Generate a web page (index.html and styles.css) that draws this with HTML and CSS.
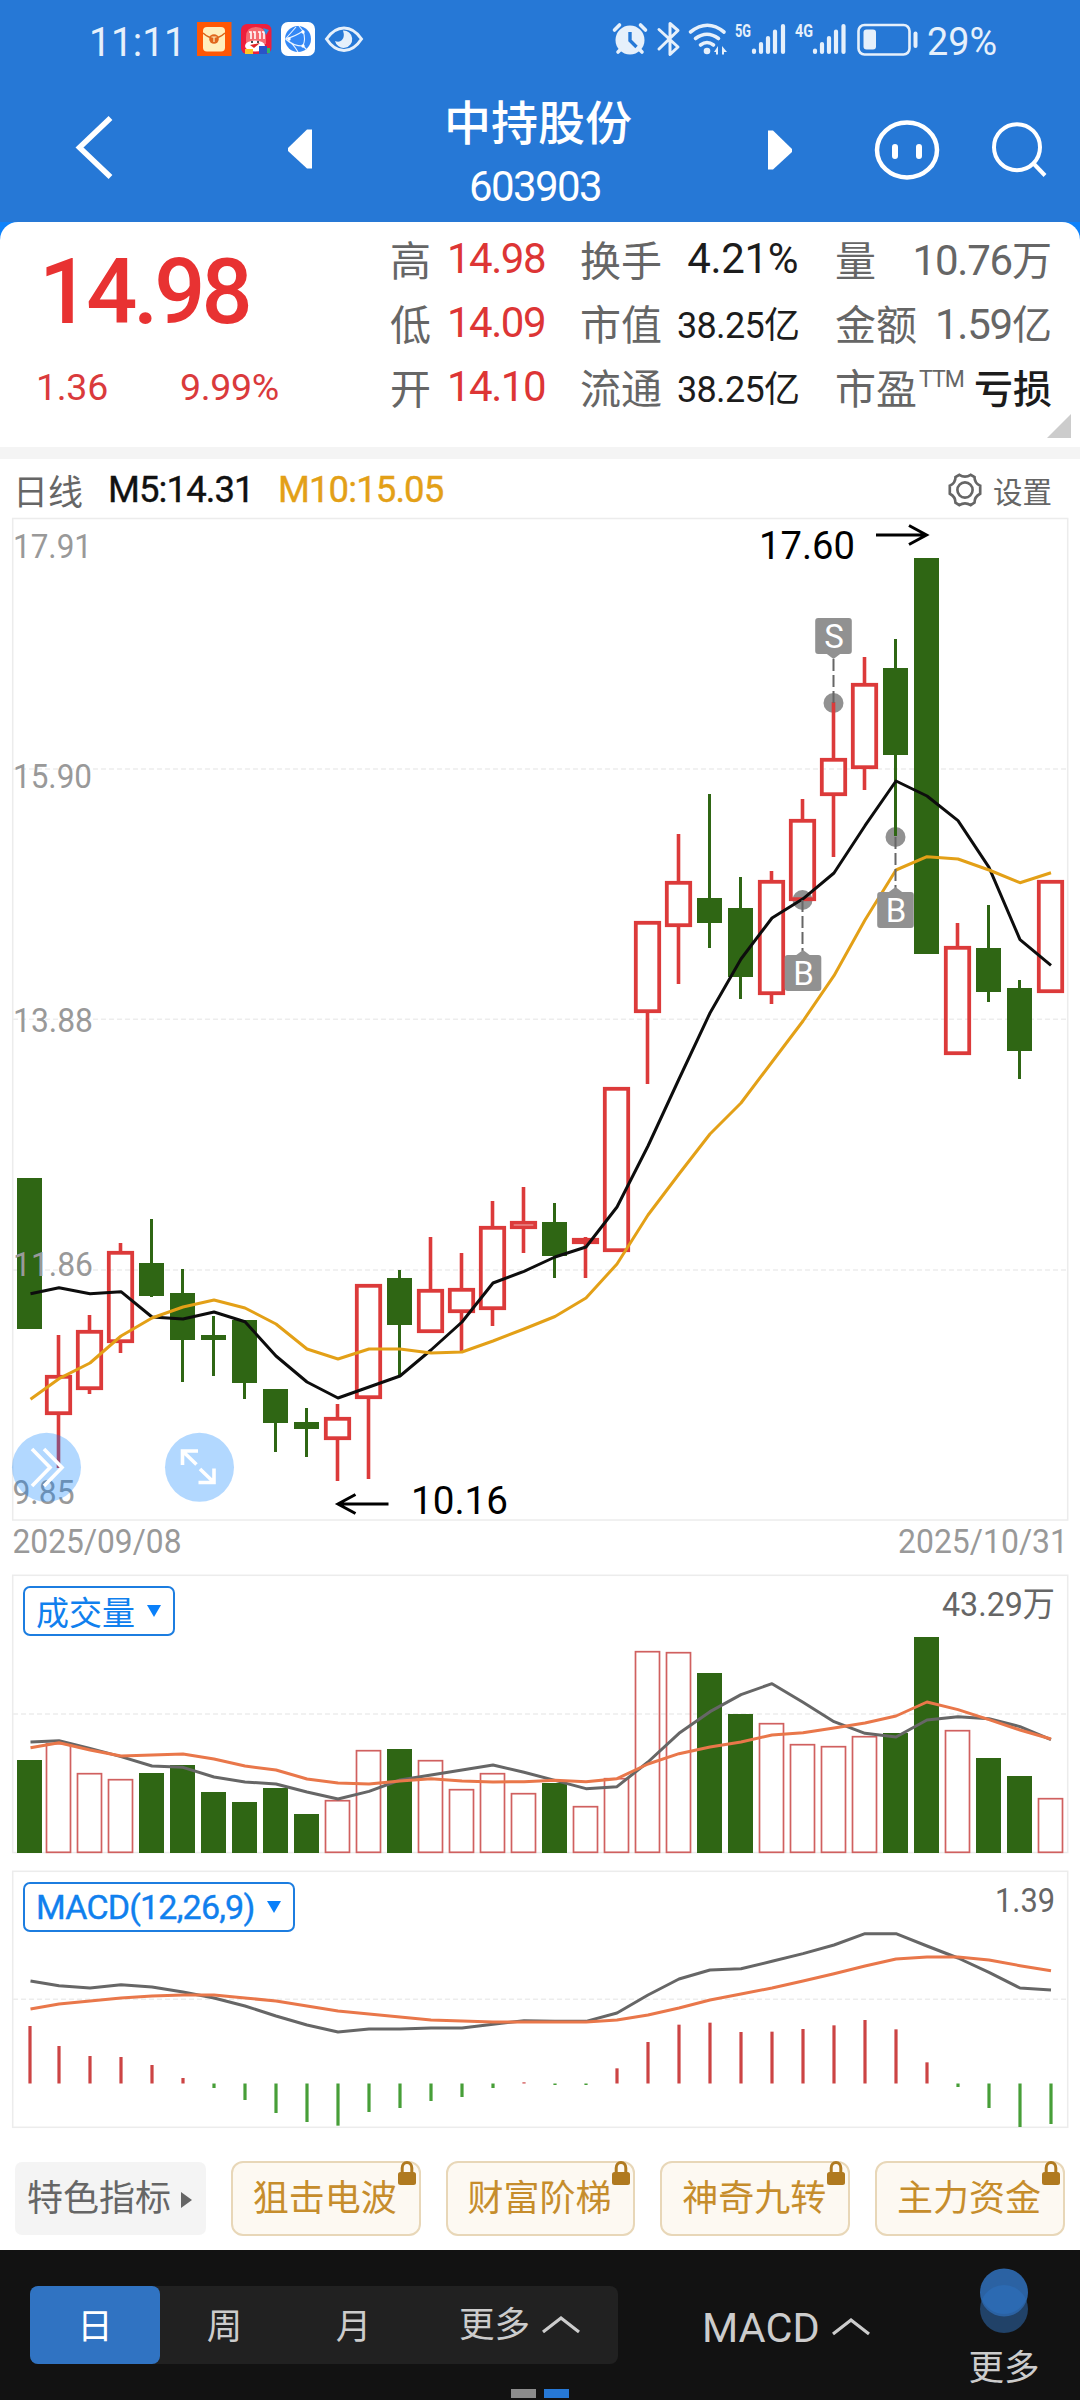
FILE: index.html
```html
<!DOCTYPE html>
<html lang="zh-CN">
<head>
<meta charset="utf-8">
<title>中持股份 603903</title>
<link rel="stylesheet" href="styles.css">
</head>
<body>
<div class="app">
  <header class="top">
    <div class="status">
      <svg class="status-icons" viewBox="0 0 1080 75" width="1080" height="75">
        <text class="clock" x="89" y="55.5" textLength="97" lengthAdjust="spacingAndGlyphs">11:11</text>
        <g>
          <rect x="197" y="22" width="34.5" height="34" fill="#ff5705"/>
          <rect x="203" y="27" width="22" height="24.500" rx="4" fill="#ffeebd"/>
          <path d="M203 33q11 10 22 0" fill="none" stroke="#d9641a" stroke-width="1.500"/>
          <circle cx="214" cy="39" r="4.800" fill="#e0651c"/>
          <path d="M211.500 37h5M214 37v5" stroke="#ffeebd" stroke-width="1.200"/>
        </g>
        <g>
          <rect x="241" y="24" width="30.500" height="30" rx="6" fill="#ed1f3c"/>
          <path d="M246 44v-7q0-10 10-10t10 10v7z" fill="#f56a70"/>
          <path d="M249 32h2v7M253 32h2v7M258 32h2v7M262 32h2v7" stroke="#fff" stroke-width="1.600" fill="none"/>
          <ellipse cx="255" cy="46" rx="10" ry="5.500" fill="#fff"/>
          <path d="M250 45l10-2-6 5z" fill="#e02525"/><circle cx="252" cy="42" r="1" fill="#111"/><circle cx="258" cy="42" r="1" fill="#111"/>
          <rect x="245" y="49" width="8" height="5" fill="#ffc625"/><rect x="259" y="46" width="8" height="8" fill="#2a54c8"/><path d="M263 28l6 2-3 5z" fill="#2b8fe0"/><rect x="267" y="48" width="3" height="5" fill="#35b566"/>
        </g>
        <g>
          <rect x="281" y="22" width="34" height="34" rx="7" fill="#fff"/>
          <circle cx="298" cy="39" r="13" fill="#3488f5"/>
          <path d="M285.500 39Q296 36 303 31Q306 39 303 46Q293 46 285.500 39Q293 43 298 52M303 31L299 26M303 46l4 4M285.500 39L296 27" fill="none" stroke="#e8f3ff" stroke-width="1.100"/>
          <circle cx="289" cy="39" r="1.700" fill="#fff"/><circle cx="303" cy="32" r="1.700" fill="#fff"/><circle cx="303" cy="46" r="1.700" fill="#fff"/>
        </g>
        <path d="M326.500 39Q334 28 344 28T361.500 39Q354 50.500 344 50.500T326.500 39z" fill="none" stroke="#e6f0fb" stroke-width="3"/>
        <path d="M343 30.500a8.700 8.700 0 1 1-8 10.500q4 2 7-1t1-9.500z" fill="#e6f0fb"/>
        <g class="ink">
          <circle cx="630" cy="40" r="14.500"/>
          <path class="ln" stroke-width="3.600" d="M614.500 30l5-5M640.500 25l5 5M618 52l3-3M639 49l3 3"/>
          <path d="M630 32v8.500l6.500 6.500" fill="none" stroke="#2678d6" stroke-width="3.400"/>
          <path class="ln" stroke-width="3" d="M659 29.500l19 17.500-8 7.500v-31l8 7-19 18.500"/>
          <path class="ln" stroke-width="3.600" d="M690.500 32q17-13.500 33.500 0M695.500 38.500q11.500-8.500 23 0M700.500 45q6.500-5 13 0"/>
          <circle cx="707" cy="51" r="3.300"/>
          <path d="M714 52l4-6v8.500h-2V52zM722 46l5 6h-3v2.500h-2z"/>
          <text class="net" x="735" y="37" textLength="16" lengthAdjust="spacingAndGlyphs">5G</text>
          <text class="net" x="795" y="37" textLength="18" lengthAdjust="spacingAndGlyphs">4G</text>
          <path class="ln" stroke-width="4.200" d="M754 50.500v1.500M761 44v8M768 38v14M775 31.500v20.500M783 26v26M815 50.500v1.500M822 44v8M829 38v14M836 31.500v20.500M843.500 26v26"/>
          <rect x="858.500" y="25" width="51" height="29.500" rx="6" fill="none" stroke="#e6f0fb" stroke-width="2.600"/>
          <rect x="863.500" y="29.500" width="12.500" height="20" rx="3"/>
          <rect x="913.500" y="31.500" width="4" height="16.500" rx="2"/>
          <text class="batt" x="927" y="54.500" textLength="70" lengthAdjust="spacingAndGlyphs">29%</text>
        </g>
      </svg>
    </div>
    <nav class="nav">
      <svg class="back" viewBox="75 114 40 68" width="40" height="68"><path d="M110.500 118L79.500 147.500 110.500 177" fill="none" stroke="#fff" stroke-width="5.500"/></svg>
      <svg class="prev" viewBox="0 0 24 40" width="24" height="40"><path d="M24 .5v39h-5L0 22v-3L19 .500z" fill="#fff"/></svg>
      <div class="title"><h1>中持股份</h1><span>603903</span></div>
      <svg class="next" viewBox="0 0 24 40" width="24" height="40"><path d="M0 .500v39h5L24 22v-3L5 .500z" fill="#fff"/></svg>
      <svg class="robot" viewBox="0 0 66 62" width="66" height="62"><ellipse cx="33" cy="31" rx="30" ry="27.500" fill="none" stroke="#fff" stroke-width="4.500"/><path d="M21 28v9M45 28v9" stroke="#fff" stroke-width="6" stroke-linecap="round"/></svg>
      <svg class="search" viewBox="990 120 60 60" width="60" height="60"><circle cx="1017" cy="147.200" r="23" fill="none" stroke="#fff" stroke-width="4"/><path d="M1034 164l11 11.500" stroke="#fff" stroke-width="4"/></svg>
    </nav>
  </header>

  <section class="quote">
    <div class="price">
      <strong>14.98</strong>
      <div class="change"><span>1.36</span><span>9.99%</span></div>
    </div>
    <dl class="col col-a">
      <div><dt>高</dt><dd class="red">14.98</dd></div>
      <div><dt>低</dt><dd class="red">14.09</dd></div>
      <div><dt>开</dt><dd class="red">14.10</dd></div>
    </dl>
    <dl class="col col-b">
      <div><dt>换手</dt><dd class="pct">4.21%</dd></div>
      <div><dt>市值</dt><dd class="small">38.25<i>亿</i></dd></div>
      <div><dt>流通</dt><dd class="small">38.25<i>亿</i></dd></div>
    </dl>
    <dl class="col col-c">
      <div><dt>量</dt><dd class="gray">10.76<i>万</i></dd></div>
      <div><dt>金额</dt><dd class="gray">1.59<i>亿</i></dd></div>
      <div><dt>市盈<sup>TTM</sup></dt><dd class="cjk">亏损</dd></div>
    </dl>
    <i class="fold"></i>
  </section>

  <div class="legend">
    <span class="kline">日线</span><span class="m5">M5:14.31</span><span class="m10">M10:15.05</span>
    <span class="settings">
      <svg viewBox="0 0 40 40" width="38" height="38" fill="none" stroke="#666" stroke-width="2.800"><path d="M14 4q6 4 12 0l4 2.300q0 6.500 6 9.200v8.500q-6 3-6 9.200L26 36q-6-4-12 0l-4-2.600q0-6.400-6-9.400v-8.500q6-2.700 6-9.200z"/><circle cx="20" cy="20" r="8"/></svg>
      <span>设置</span>
    </span>
  </div>

  <svg id="kchart" viewBox="0 516 1080 1050" width="1080" height="1050"></svg>
  <div class="panel volume">
    <svg id="vchart" viewBox="0 1566 1080 296" width="1080" height="296"></svg>
    <button class="picker">成交量<b></b></button>
  </div>
  <div class="panel macd">
    <svg id="mchart" viewBox="0 1862 1080 275" width="1080" height="275"></svg>
    <button class="picker latin"><span>MACD(12,26,9)</span><b></b></button>
  </div>

  <div class="chips">
    <div class="chip plain">特色指标<b></b></div>
    <div class="chip">狙击电波<svg class="lock" viewBox="0 0 18 24" width="18" height="24"><path d="M4.200 11V7a4.800 5.500 0 0 1 9.600 0v4" fill="none" stroke="#b07a20" stroke-width="3"/><rect y="11" width="18" height="13" rx="2.500" fill="#b07a20"/></svg></div>
    <div class="chip">财富阶梯<svg class="lock" viewBox="0 0 18 24" width="18" height="24"><path d="M4.200 11V7a4.800 5.500 0 0 1 9.600 0v4" fill="none" stroke="#b07a20" stroke-width="3"/><rect y="11" width="18" height="13" rx="2.500" fill="#b07a20"/></svg></div>
    <div class="chip">神奇九转<svg class="lock" viewBox="0 0 18 24" width="18" height="24"><path d="M4.200 11V7a4.800 5.500 0 0 1 9.600 0v4" fill="none" stroke="#b07a20" stroke-width="3"/><rect y="11" width="18" height="13" rx="2.500" fill="#b07a20"/></svg></div>
    <div class="chip">主力资金<svg class="lock" viewBox="0 0 18 24" width="18" height="24"><path d="M4.200 11V7a4.800 5.500 0 0 1 9.600 0v4" fill="none" stroke="#b07a20" stroke-width="3"/><rect y="11" width="18" height="13" rx="2.500" fill="#b07a20"/></svg></div>
  </div>

  <footer class="bottom">
    <div class="tabs">
      <span class="tab on">日</span><span class="tab">周</span><span class="tab">月</span>
      <span class="tab more">更多<svg viewBox="0 0 40 20" width="40" height="20"><path d="M2 17L20 3l18 14" fill="none" stroke="#ccc" stroke-width="3.200"/></svg></span>
    </div>
    <div class="indicator">MACD<svg viewBox="0 0 40 20" width="40" height="20"><path d="M2 17L20 3l18 14" fill="none" stroke="#ccc" stroke-width="3.200"/></svg></div>
    <div class="menu">
      <svg viewBox="0 0 48 66" width="48" height="66"><circle cx="24" cy="41" r="24" fill="#214268"/><circle cx="24" cy="24.500" r="24" fill="#2b62a3"/><path d="M2 31.500a24 24 0 0 1 44 0a24 24 0 0 1-44 0z" fill="#2c6ab2"/></svg>
      <span>更多</span>
    </div>
    <div class="pager"><i></i><i class="cur"></i></div>
  </footer>
</div>
<script src="chart.js"></script>
</body>
</html>
```
FILE: styles.css
```css
* { box-sizing: border-box; margin: 0; padding: 0; }
body {
  width: 1080px;
  height: 2400px;
  overflow: hidden;
  background: #fff;
  color: #666;
  font-family: Roboto, "Noto Sans CJK SC", sans-serif;
}
i { font-style: normal; }
svg { display: block; flex: none; }
.app { display: flex; flex-direction: column; height: 2400px; }

/* header */
.top { height: 222px; background: #2678d6; color: #fff; flex: none; }
.status { height: 75px; }
.clock { font-size: 41px; fill: #e6f0fb; }
.ink { fill: #e6f0fb; }
.ink .ln { fill: none; stroke: #e6f0fb; stroke-linecap: round; stroke-linejoin: round; }
.net { font-size: 19px; font-weight: 700; }
.batt { font-size: 38px; }
.nav { display: flex; height: 147px; align-items: flex-start; }
.back { margin: 39px 0 0 75px; }
.prev { margin: 54px 0 0 173px; }
.title { width: 276px; margin: 21px 92px 0 88px; text-align: center; }
.title h1 { font-size: 47px; line-height: 56px; font-weight: 500; }
.title span { display: block; margin: 7px 6px 0 0; font-size: 42px; line-height: 56px; letter-spacing: -1.600px; }
.next { margin-top: 55px; }
.robot { margin: 44px 0 0 82px; }
.search { margin: 45px 0 0 50px; }

/* quote */
.quote {
  position: relative;
  display: flex;
  flex: none;
  height: 225px;
  border-radius: 18px 18px 0 0;
  background: #fff;
}
.app::before { content: ""; position: absolute; z-index: -1; top: 222px; left: 0; width: 1080px; height: 24px; background: #0d82fb; }
.price { width: 390px; padding: 26px 0 0 39px; color: #e83232; }
.price strong { display: block; font-size: 90px; line-height: 90px; font-weight: 500; letter-spacing: -4px; }
.change { display: flex; gap: 72px; margin-top: 24px; margin-left: -3px; font-size: 37.500px; line-height: 50px; color: #da3a3c; letter-spacing: -.3px; }
.col { padding-top: 4px; }
.col div { display: flex; align-items: center; justify-content: space-between; height: 64px; }
dt { font-size: 41px; white-space: nowrap; }
dd { font-size: 42px; letter-spacing: -1.200px; color: #1c1c1c; white-space: nowrap; }
dd i { font-size: 40px; letter-spacing: 0; }
dd.red { color: #dd3535; letter-spacing: -1.500px; margin-right: 1px; }
dd.pct { letter-spacing: -.4px; margin-right: 2px; }
dd.gray { color: #666; }
dd.small { font-size: 36px; letter-spacing: -.7px; }
dd.small i { font-size: 36px; letter-spacing: 0; }
dd.cjk { font-size: 39px; letter-spacing: 0; font-weight: 500; }
.col-a { width: 156px; margin-right: 34px; }
.col-b { width: 220px; margin-right: 35px; }
.col-c { width: 217px; }
sup { display: inline-block; font-size: 23px; line-height: 23px; vertical-align: 17px; letter-spacing: -1px; margin-left: 2px; }
.fold { position: absolute; right: 9px; bottom: 9px; border: 12px solid transparent; border-right-color: #ccc; border-bottom-color: #ccc; }

/* legend */
.legend { display: flex; align-items: center; flex: none; height: 69px; padding: 4px 28px 0 13px; border-top: 12px solid #f4f4f4; font-size: 36.500px; }
.kline { font-size: 35px; margin-right: 25px; }
.m5 { color: #111; width: 141px; margin-right: 29px; letter-spacing: -.9px; white-space: nowrap; -webkit-text-stroke: .4px; }
.m10 { color: #e3a017; letter-spacing: -.9px; -webkit-text-stroke: .4px; }
.settings { display: flex; align-items: center; gap: 9px; margin-left: auto; font-size: 29.500px; }

/* charts */
#kchart { flex: none; }
.frame { fill: none; stroke: #ececec; stroke-width: 1.500; }
.grid { stroke: #ededed; stroke-width: 1.500; stroke-dasharray: 5 3; }
.up { fill: none; stroke: #dc3a3a; stroke-width: 3.800; }
.upwick { stroke: #dc3a3a; stroke-width: 3.600; }
.down { fill: #2f6614; }
.downwick { stroke: #2f6614; stroke-width: 3; }
.vup { fill: none; stroke: #d0605f; stroke-width: 1.700; }
.line { fill: none; stroke-width: 3; stroke-linejoin: round; }
.black { stroke: #0d0d0d; }
.gold { stroke: #e3a017; }
.dim { stroke: #666; }
.orange { stroke: #e9774a; }
.hup { stroke: #cc4444; stroke-width: 3.200; }
.hdown { stroke: #479e38; stroke-width: 3.200; }
.axis { fill: #999; font-size: 33px; }
.peak { fill: #000; font-size: 39px; }
.num { fill: #666; font-size: 34px; }
.arrow { fill: none; stroke: #000; stroke-width: 3; }
.tag { fill: #919191; }
.tagtext { fill: #fff; font-size: 33px; text-anchor: middle; }
.leader { stroke: #666; stroke-width: 2; stroke-dasharray: 12 4; }
.bubble { fill: #007dff; fill-opacity: .3; }
.glyph { fill: none; stroke: #fff; stroke-width: 3.600; }

.panel { position: relative; flex: none; }
.picker {
  position: absolute;
  left: 23px;
  top: 20px;
  display: flex;
  align-items: center;
  height: 50px;
  width: 152px;
  padding: 0 12px 0 11px;
  justify-content: space-between;
  border: 2px solid #1c7de0;
  border-radius: 7px;
  background: #fff;
  color: #1080ee;
  font: 33px Roboto, "Noto Sans CJK SC", sans-serif;
  white-space: nowrap;
}
.picker.latin { width: 272px; font-size: 34px; letter-spacing: -.8px; -webkit-text-stroke: .4px; }
.picker b { border: 7px solid transparent; border-top: 12px solid #0a80fa; border-bottom: 0; }

/* indicator chips */
.chips { display: flex; gap: 25px; flex: none; height: 113px; padding: 24px 15px 0; }
.chip { position: relative; width: 190px; height: 75px; padding-right: 2px; border: 2px solid #e8d7b8; border-radius: 12px; background: #fdf9f2; color: #c68d2c; font-size: 36px; line-height: 73px; text-align: center; white-space: nowrap; }
.chip.plain { display: flex; align-items: center; justify-content: space-between; width: 191px; height: 73px; margin-top: 1px; padding: 2px 14px 0 12px; border: 0; border-radius: 7px; background: #f4f4f4; color: #666; }
.chip.plain b { border: 8px solid transparent; border-left: 11px solid #666; border-right: 0; }
.lock { position: absolute; right: 3px; top: -2px; }

/* bottom bar */
.bottom { position: relative; display: flex; height: 150px; background: #121212; color: #ccc; font-size: 35.500px; }
.tabs { display: flex; width: 588px; height: 78px; margin: 36px 0 0 30px; background: #212121; border-radius: 8px; line-height: 82px; }
.tab { width: 129px; text-align: center; }
.tab.on { width: 130px; border-radius: 8px; background: #3073c2; color: #fff; }
.tab.more { display: flex; align-items: center; gap: 11px; width: 200px; padding-left: 41px; }
.indicator { display: flex; align-items: center; gap: 11px; height: 82px; margin: 36px 0 0 84px; width: 258px; font-size: 41.500px; }
.tab svg, .indicator svg { margin-bottom: 1px; }
.menu { display: flex; flex-direction: column; align-items: center; width: 88px; margin-top: 18px; }
.menu span { margin-top: 9px; line-height: 50px; }
.pager { position: absolute; left: 511px; bottom: 2px; display: flex; gap: 8px; }
.pager i { width: 25px; height: 9px; background: #8c8c8c; }
.pager i.cur { background: #2678d6; }
```
FILE: chart.js
```js
const NS = 'http://www.w3.org/2000/svg';
const cx = i => (i === 0 ? 29.5 : 27.5 + 31 * i);

function add(svg, tag, attrs, text) {
  const node = document.createElementNS(NS, tag);
  for (const key in attrs) node.setAttribute(key, attrs[key]);
  if (text !== undefined) node.textContent = text;
  svg.appendChild(node);
}
const seg = (svg, x1, y1, x2, y2, cls) => add(svg, 'line', { x1, y1, x2, y2, class: cls });
const poly = (svg, ys, cls) =>
  add(svg, 'polyline', { points: ys.map((y, i) => (i ? cx(i) + .5 : 30.5) + ',' + y).join(' '), class: 'line ' + cls });
const label = (svg, x, y, w, text, cls) =>
  add(svg, 'text', { x, y, textLength: w, lengthAdjust: 'spacingAndGlyphs', class: cls }, text);
const frame = (svg, y, h) => add(svg, 'rect', { x: 12.7, y, width: 1055, height: h, class: 'frame' });

/* candles: direction, high, body top, body bottom, low */
const candles = [
  ['d',1178,1178,1329,1329],['u',1335,1375,1415,1468],['u',1315,1330,1390,1394],['u',1243,1251,1343,1353],
  ['d',1219,1263,1296,1297],['d',1269,1293,1340,1382],['d',1316,1335,1340,1376],['d',1320,1320,1383,1399],
  ['d',1389,1389,1423,1452],['d',1408,1422,1429,1457],['u',1404,1417,1440,1481],['u',1284,1284,1399,1479],
  ['d',1270,1278,1325,1376],['u',1237,1289,1333,1333],['u',1253,1288,1313,1352],['u',1201,1226,1310,1326],
  ['u',1187,1221,1229,1253],['d',1203,1222,1256,1278],['u',1237,1238,1244,1278],['u',1087,1087,1252,1252],
  ['u',921,921,1013,1084],['u',834,881,927,984],['d',794,898,923,948],['d',877,908,977,999],
  ['u',871,880,995,1004],['u',799,819,901,901],['u',702,758,796,857],['u',657,683,769,790],
  ['d',639,668,755,836],['d',558,558,954,954],['u',923,946,1055,1055],['d',905,948,992,1002],
  ['d',980,988,1051,1079],['u',880,880,993,993]
];
const k = document.getElementById('kchart');
frame(k, 518.5, 1001.5);
[769, 1019.3, 1270].forEach(y => seg(k, 13, y, 1067, y, 'grid'));
[[833.5, 703], [802.5, 900], [895.5, 837]].forEach(p => add(k, 'circle', { cx: p[0], cy: p[1], r: 10, class: 'tag' }));
candles.forEach(([dir, high, top, bottom, low], i) => {
  const x = cx(i);
  const wick = dir === 'u' ? 'upwick' : 'downwick';
  if (high < top) seg(k, x, high, x, top + 1, wick);
  if (low > bottom) seg(k, x, bottom - 1, x, low, wick);
  if (dir === 'u') add(k, 'rect', { x: x - 11.7, y: top + 1.8, width: 23.4, height: bottom - top - 3.6, class: 'up' });
  else add(k, 'rect', { x: x - 12.5, y: top, width: 25, height: bottom - top, class: 'down' });
});
poly(k, [1293.7,1287.7,1293.7,1291.7,1317,1319,1312,1321.7,1356,1382,1398,1387,1376,1350,1322,1283,1271.3,1257,1247,
  1207,1146,1079,1013,959,918,898.8,873,825.7,781,796,820.7,867.4,939.7,965.4], 'black');
poly(k, [1399.3,1378.7,1363,1336,1318,1307,1300,1308,1324,1349,1359,1349,1349,1353,1352,1341,1329,1316.5,1298,
  1264,1215,1174,1134,1103,1062,1021,975.7,920,870,856.7,859,870,882.7,872.7], 'gold');

seg(k, 833.5, 659, 833.5, 703, 'leader');
seg(k, 802.5, 900, 802.5, 951, 'leader');
seg(k, 895.5, 837, 895.5, 888, 'leader');
[['S', 833.5, 618, 1], ['B', 803, 955, 0], ['B', 895.5, 892, 0]].forEach(([t, x, y, down]) => {
  add(k, 'rect', { x: x - 18.3, y, width: 36.6, height: 36, rx: 3, class: 'tag' });
  add(k, 'path', { d: down ? `M${x - 8} ${y + 35}h16l-8 6z` : `M${x - 8} ${y + 1}h16l-8-6z`, class: 'tag' });
  add(k, 'text', { x: x + .5, y: y + 30, class: 'tagtext' }, t);
});

label(k, 13, 558, 79, '17.91', 'axis');
label(k, 13, 788, 79, '15.90', 'axis');
label(k, 13, 1031.5, 80, '13.88', 'axis');
label(k, 13, 1275.5, 80, '11.86', 'axis');
label(k, 12.5, 1503.5, 62, '9.85', 'axis');
label(k, 12.5, 1553, 169, '2025/09/08', 'axis');
label(k, 898, 1553, 170, '2025/10/31', 'axis');
label(k, 759, 559, 96, '17.60', 'peak');
label(k, 411, 1514, 97, '10.16', 'peak');
add(k, 'path', { d: 'M876 535h50M909 525.500l17.500 9.500-17.500 9.500', class: 'arrow' });
add(k, 'path', { d: 'M388.500 1504h-50M355.500 1494.500l-17.500 9.500 17.500 9.500', class: 'arrow' });
add(k, 'circle', { cx: 46.5, cy: 1467.3, r: 34.5, class: 'bubble' });
add(k, 'circle', { cx: 199.5, cy: 1467.3, r: 34.5, class: 'bubble' });
add(k, 'path', { d: 'M32 1449l18 18.500-18 18.500M44 1449l18 18.500-18 18.500', class: 'glyph' });
add(k, 'path', { d: 'M182.500 1465v-14h15.500M183 1451.500l13.500 13M200 1469l13.500 13M198.500 1482.500h15.500v-14', class: 'glyph' });

/* volume: direction and bar top */
const v = document.getElementById('vchart');
const vol = [['d',1760],['u',1743],['u',1773],['u',1779],['d',1773],['d',1765],['d',1792],['d',1802],['d',1788],['d',1814],
  ['u',1800],['u',1750],['d',1749],['u',1760],['u',1789],['u',1773],['u',1793],['d',1783],['u',1806],['u',1778],
  ['u',1651],['u',1652],['d',1673],['d',1714],['u',1723],['u',1744],['u',1746],['u',1736],['d',1733],['d',1637],
  ['u',1730],['d',1758],['d',1776],['u',1798]];
frame(v, 1575.3, 277.2);
seg(v, 13, 1714, 1067, 1714, 'grid');
vol.forEach(([dir, top], i) => {
  const x = cx(i);
  if (dir === 'u') add(v, 'rect', { x: x - 12, y: top + .7, width: 24, height: 1851.600 - top, class: 'vup' });
  else add(v, 'rect', { x: x - 12.5, y: top, width: 25, height: 1853 - top, class: 'down' });
});
const vy = a => a.map(n => 1560 + n / 3);
poly(v, vy([546,542,565,590,618,622,651,666,672,696,717,694,660,645,630,615,637,661,686,680,606,520,455,404,371,427,485,
  520,531,480,470,476,500,539]), 'dim');
poly(v, vy([563,548,570,588,585,582,597,618,630,657,669,672,663,656,663,666,665,661,665,656,612,581,561,546,525,518,504,
  489,468,426,449,479,510,537]), 'orange');
label(v, 942, 1616, 113, '43.29万', 'num');

/* MACD */
const m = document.getElementById('mchart');
const my = a => a.map(n => 1860 + n / 3);
frame(m, 1871.3, 256);
seg(m, 13, 1999.3, 1067, 1999.3, 'grid');
my([498,558,588,591,615,654,684,720,759,786,797,756,744,723,711,684,667,675,675,625,546,494,488,516,515,507,496,480,508,
  607,681,744,801,792]).forEach((y, i) => {
  const x = i ? cx(i) + .5 : 30;
  seg(m, x, 2083.500, x, y, y < 2083.500 ? 'hup' : 'hdown');
});
poly(m, my([363,377,384,374,381,396,414,438,468,495,516,507,507,504,504,493,482,484,484,459,405,357,330,326,304,281,255,
  221,221,258,294,337,384,390]), 'dim');
poly(m, my([447,432,423,414,408,405,405,414,423,438,453,462,471,480,483,486,486,486,486,480,465,444,420,402,384,363,341,
  318,297,291,291,300,317,332]), 'orange');
label(m, 995, 1912, 60, '1.39', 'num');
```
